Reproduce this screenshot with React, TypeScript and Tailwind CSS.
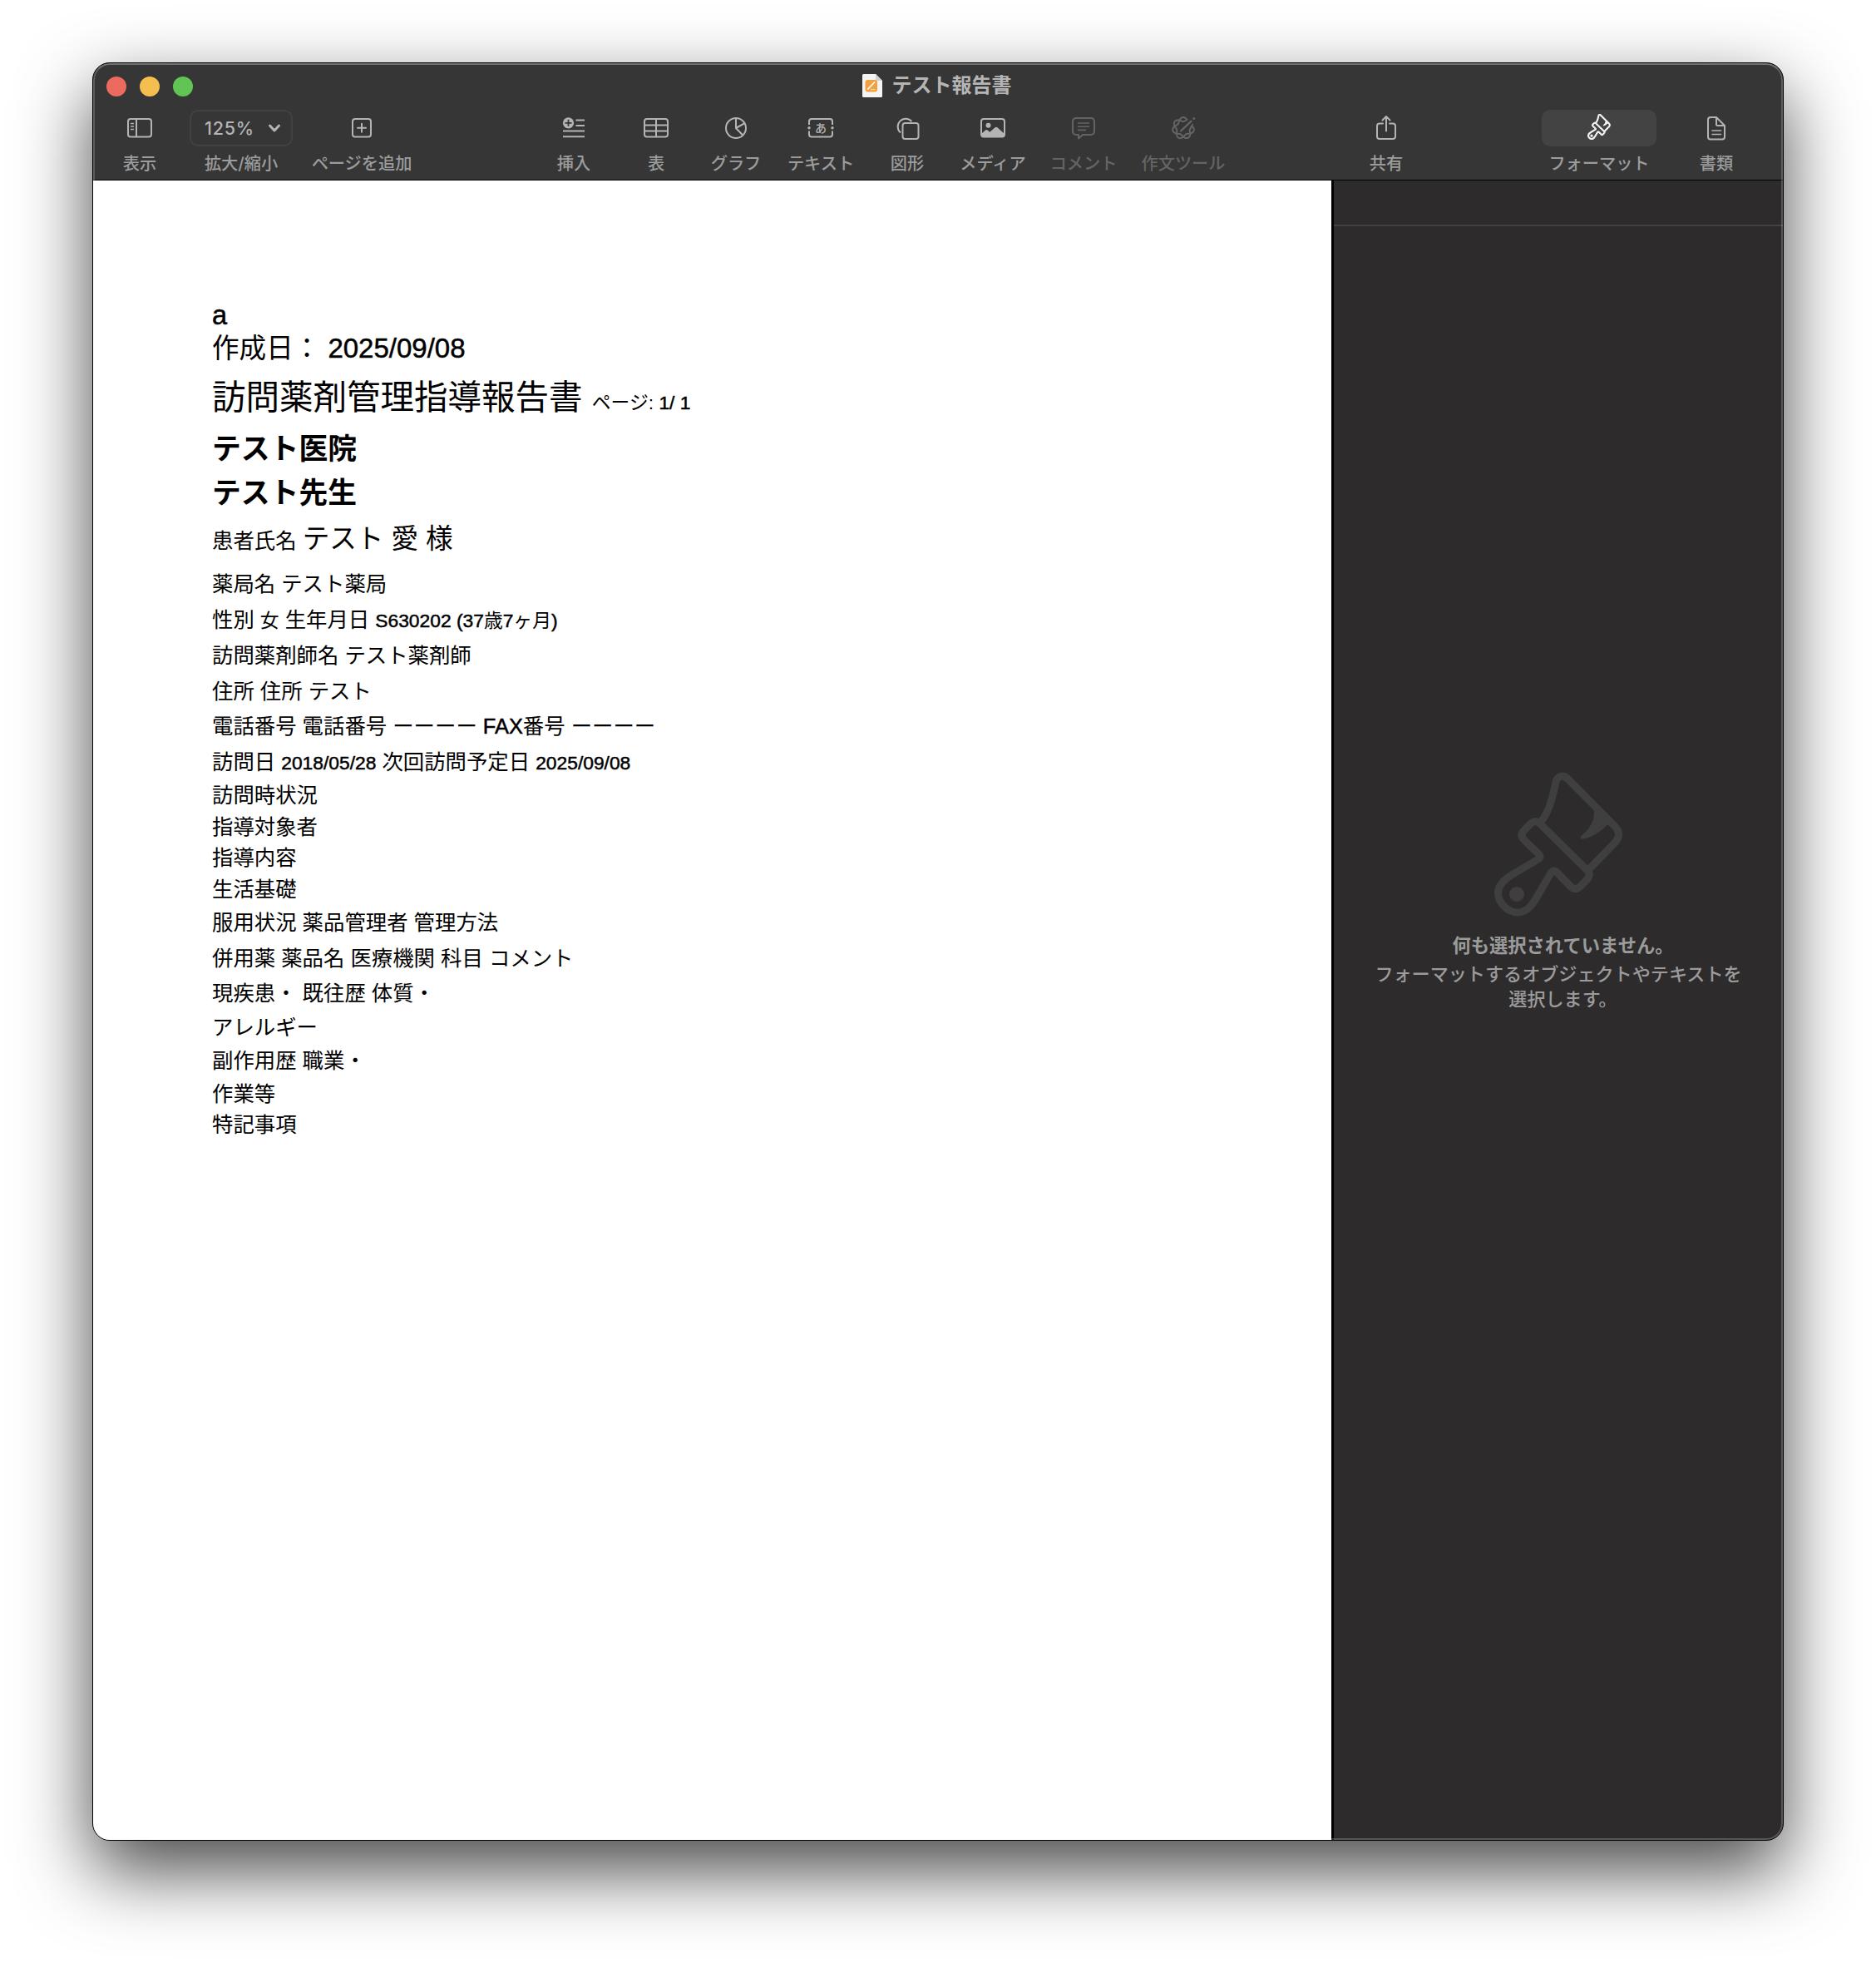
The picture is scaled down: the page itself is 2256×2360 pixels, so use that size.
import type { ReactNode } from 'react'
import clsx from 'clsx'

const UI_FONT = "font-['Inter','Noto_Sans_CJK_JP',sans-serif]"
const DOC_FONT = "font-['Liberation_Sans','Noto_Sans_CJK_JP',sans-serif]"

function SidebarIcon() {
  return (
    <svg width="32" height="26" viewBox="0 0 32 26" fill="none" stroke="currentColor" strokeWidth="2">
      <rect x="2" y="2" width="28" height="21.5" rx="3" />
      <path d="M12 2v21.5" />
      <path d="M5 7.5h4M5 11h4M5 14.5h4" strokeWidth="1.4" />
    </svg>
  )
}

function AddPageIcon() {
  return (
    <svg width="26" height="26" viewBox="0 0 26 26" fill="none" stroke="currentColor" strokeWidth="2">
      <rect x="2" y="2" width="22" height="21.5" rx="3" />
      <path d="M13 7.8v10M8 12.8h10" strokeLinecap="round" />
    </svg>
  )
}

function InsertIcon() {
  return (
    <svg width="28" height="26" viewBox="0 0 28 26" fill="none" stroke="currentColor" strokeWidth="2">
      <circle cx="7.5" cy="6.8" r="6.6" fill="currentColor" stroke="none" />
      <path d="M7.5 2.8v8M3.5 6.8h8" stroke="#363636" strokeWidth="1.8" />
      <path d="M16.5 3.5H27M16.5 10H27M1 16.5h26M1 23.2h26" />
    </svg>
  )
}

function TableIcon() {
  return (
    <svg width="32" height="26" viewBox="0 0 32 26" fill="none" stroke="currentColor" strokeWidth="2">
      <rect x="2" y="2" width="28" height="21.5" rx="3" />
      <path d="M16 2v21.5M2 9.5h28M2 16.5h28" />
    </svg>
  )
}

function ChartIcon() {
  return (
    <svg width="28" height="28" viewBox="0 0 28 28" fill="none" stroke="currentColor" strokeWidth="2">
      <circle cx="14" cy="14" r="12" />
      <path d="M14 2v12l8 8.3M14 14l10.5-5.8" />
    </svg>
  )
}

function TextIcon() {
  return (
    <svg width="32" height="26" viewBox="0 0 32 26" fill="none" stroke="currentColor" strokeWidth="2">
      <path d="M2 9V5a3 3 0 0 1 3-3h22a3 3 0 0 1 3 3v4M2 16.5v4a3 3 0 0 0 3 3h22a3 3 0 0 0 3-3v-4" />
      <circle cx="2" cy="12.8" r="1.7" fill="currentColor" stroke="none" />
      <circle cx="30" cy="12.8" r="1.7" fill="currentColor" stroke="none" />
      <text x="16" y="18" textAnchor="middle" fill="currentColor" stroke="none" className="font-['Noto_Sans_CJK_JP',sans-serif] text-[14px] font-medium">あ</text>
    </svg>
  )
}

function ShapeIcon() {
  return (
    <svg width="30" height="30" viewBox="0 0 30 30" fill="none" stroke="currentColor" strokeWidth="2">
      <rect x="9.5" y="9" width="19" height="19" rx="3" />
      <path d="M7 20.5A9.5 9.5 0 1 1 20.3 7" />
    </svg>
  )
}

function MediaIcon() {
  return (
    <svg width="32" height="26" viewBox="0 0 32 26" fill="none" stroke="currentColor" strokeWidth="2">
      <rect x="2" y="2" width="28" height="21.5" rx="3" />
      <circle cx="10.5" cy="9.8" r="3" fill="currentColor" stroke="none" />
      <path d="M2 20l5-4.5q1.3-1 2.6 0l2.7 2.3 6.3-5.5q1.4-1.2 2.8 0L30 20v1.5a2 2 0 0 1-2 2H4a2 2 0 0 1-2-2z" fill="currentColor" stroke="none" />
    </svg>
  )
}

function CommentIcon() {
  return (
    <svg width="30" height="30" viewBox="0 0 30 30" fill="none" stroke="currentColor" strokeWidth="2" strokeLinejoin="round">
      <path d="M6 3h18a4 4 0 0 1 4 4v12a4 4 0 0 1-4 4H14l-5 4.5V23H6a4 4 0 0 1-4-4V7a4 4 0 0 1 4-4z" />
      <path d="M8 9h14M8 13.2h14M8 17.4h10" strokeWidth="1.6" />
    </svg>
  )
}

// Seven interlaced lobes: one strand that goes round twice.
const knot = Array.from({ length: 181 }, (_, i) => {
  const angle = (i / 180) * 4 * Math.PI
  const r = 10.5 + 2.5 * Math.cos(3.5 * (angle - 0.68))
  return `${(15 + r * Math.cos(angle)).toFixed(2)},${(16 - r * Math.sin(angle)).toFixed(2)}`
}).join(' ')

function WritingToolsIcon() {
  return (
    <svg width="30" height="32" viewBox="0 0 30 32" fill="none" stroke="currentColor" strokeWidth="2" strokeLinecap="round">
      <polygon points={knot} />
      <path d="M16 15.5L29 3" stroke="#363636" strokeWidth="7.5" />
      <path d="M12 19.5L24.5 7.7" strokeWidth="2.4" />
      <circle cx="27.8" cy="4.6" r="1.5" fill="currentColor" stroke="none" />
    </svg>
  )
}

function ShareIcon() {
  return (
    <svg width="26" height="32" viewBox="0 0 26 32" fill="none" stroke="currentColor" strokeWidth="2" strokeLinecap="round" strokeLinejoin="round">
      <path d="M9 10.5H5a3 3 0 0 0-3 3V26a3 3 0 0 0 3 3h16a3 3 0 0 0 3-3V13.500a3 3 0 0 0-3-3h-4" />
      <path d="M13 19.5V2.5M8.5 6.5L13 2l4.500 4.500" />
    </svg>
  )
}

function DocumentIcon() {
  return (
    <svg width="24" height="30" viewBox="0 0 24 30" fill="none" stroke="currentColor" strokeWidth="2" strokeLinejoin="round">
      <path d="M5 2h7l10 10v13.5a3 3 0 0 1-3 3H5a3 3 0 0 1-3-3V5a3 3 0 0 1 3-3z" />
      <path d="M12 2v8.5a1.500 1.500 0 0 0 1.500 1.500H22" />
      <path d="M7 18h10.5M7 22.500h10.500" strokeWidth="1.6" strokeLinecap="round" />
    </svg>
  )
}

function BrushIcon({ className, strokeWidth }: { className: string; strokeWidth: number }) {
  return (
    <svg className={className} viewBox="0 0 155 174" fill="none" stroke="currentColor" strokeWidth={strokeWidth} strokeLinejoin="round">
      <path d="M56 60C65 50 70 32 73.5 14C75 4 84 2.5 89.5 9.5L146 66.5Q153 75 146 84L113 118" />
      <path d="M54 61.5Q49 57.5 44 62L35.5 70.5Q30.5 76 35.5 81.5L54 99.5Q56.5 102 53.5 104.5L24 122C8 131 4.5 139 4.5 146C4.5 157 16 169 28 169C40 169 47 158 52 149L68 121.5Q71.5 117 75 120.5L92 138Q97.5 143 103 138L112 129Q116.5 123 112 118.5Z" />
      <path d="M120 47C121 60 113 70 104 77.5Q102.5 81 107 80.8C118 79 130 70 136.5 63L142 60z" fill="currentColor" stroke="none" />
      <circle cx="27" cy="147" r="9" fill="currentColor" stroke="none" />
    </svg>
  )
}

interface ToolbarItemProps {
  label: string
  className: string
  disabled?: boolean
  children: ReactNode
}

function ToolbarItem({ label, className, disabled, children }: ToolbarItemProps) {
  return (
    <div className={clsx('flex shrink-0 flex-col items-center', disabled ? 'text-[#646464]' : 'text-[#b4b4b4]', className)}>
      <div className="flex h-11 w-full items-center justify-center">{children}</div>
      <span className={clsx('mt-[7px] text-[20.2px] leading-7 font-medium whitespace-nowrap', !disabled && 'text-[#9c9c9c]')}>{label}</span>
    </div>
  )
}

function TitleBar() {
  return (
    <div className="grid h-14 grid-cols-[1fr_auto_1fr] items-center">
      <div className="flex gap-4 pl-4">
        <span className="size-6 rounded-full bg-[#ed6a5e]" />
        <span className="size-6 rounded-full bg-[#f5bf4f]" />
        <span className="size-6 rounded-full bg-[#61c554]" />
      </div>
      <div className="flex items-center gap-3 pr-[3px] pb-0.5">
        <svg width="24" height="28" viewBox="0 0 24 28">
          <path d="M1.5 0H16l8 8v18.5a1.5 1.5 0 0 1-1.5 1.5h-21A1.5 1.5 0 0 1 0 26.5v-25A1.5 1.5 0 0 1 1.5 0z" fill="#f4f4f4" />
          <path d="M16 0l8 8h-6.5A1.5 1.5 0 0 1 16 6.5z" fill="#d0d0d0" />
          <rect x="3.5" y="7" width="14.5" height="14.5" rx="3" fill="#f2a141" />
          <path d="M6.8 18l7.7-8" stroke="#fff" strokeWidth="1.8" strokeLinecap="round" />
          <path d="M10 18.6h5.5" stroke="#fbd9ae" />
        </svg>
        <h1 className="text-2xl leading-8 font-bold text-[#b5b5b5]">テスト報告書</h1>
      </div>
    </div>
  )
}

function Toolbar() {
  return (
    <div className="flex h-[84px] items-start">
      <ToolbarItem label="表示" className="ml-9 w-10"><SidebarIcon /></ToolbarItem>
      <ToolbarItem label="拡大/縮小" className="ml-10 w-[124px]">
        <div className="flex h-11 w-full items-center justify-between rounded-[10px] border-2 border-[#414141] pr-3 pl-4">
          <span className="text-[21.5px] leading-6 font-medium tracking-[0.8px]">125%</span>
          <svg width="16" height="12" viewBox="0 0 16 12" fill="none" stroke="currentColor" strokeWidth="3" strokeLinecap="round" strokeLinejoin="round">
            <path d="M2.5 3L8 9l5.5-6" />
          </svg>
        </div>
      </ToolbarItem>
      <ToolbarItem label="ページを追加" className="ml-[23px] w-[120px]"><AddPageIcon /></ToolbarItem>

      <ToolbarItem label="挿入" className="ml-[175px] w-10"><InsertIcon /></ToolbarItem>
      <ToolbarItem label="表" className="ml-[63px] w-8"><TableIcon /></ToolbarItem>
      <ToolbarItem label="グラフ" className="ml-[50px] w-15"><ChartIcon /></ToolbarItem>
      <ToolbarItem label="テキスト" className="ml-8 w-20"><TextIcon /></ToolbarItem>
      <ToolbarItem label="図形" className="ml-11 w-10"><ShapeIcon /></ToolbarItem>
      <ToolbarItem label="メディア" className="ml-[43px] w-20"><MediaIcon /></ToolbarItem>
      <ToolbarItem label="コメント" className="ml-[29px] w-20" disabled><CommentIcon /></ToolbarItem>
      <ToolbarItem label="作文ツール" className="ml-[30px] w-25" disabled><WritingToolsIcon /></ToolbarItem>

      <ToolbarItem label="共有" className="ml-[174px] w-10"><ShareIcon /></ToolbarItem>
      <ToolbarItem label="フォーマット" className="ml-[167px] w-[138px]">
        <div className="flex h-11 w-full items-center justify-center rounded-[10px] bg-[#434343] text-[#f2f2f2]">
          <BrushIcon className="mb-1 h-[31px] w-7" strokeWidth={12} />
        </div>
      </ToolbarItem>
      <ToolbarItem label="書類" className="ml-13 w-10"><DocumentIcon /></ToolbarItem>
    </div>
  )
}

// Every row ends 11px below its baseline, so the heights are baseline distances.
function Row({ className, children }: { className: string; children: ReactNode }) {
  return (
    <div className={clsx('flex items-end', className)}>
      <p className="text-[25.4px] leading-10 whitespace-pre">{children}</p>
    </div>
  )
}

function Small({ children }: { children: ReactNode }) {
  return <span className="text-[22.8px] leading-none">{children}</span>
}

function Large({ children }: { children: ReactNode }) {
  return <span className="text-[32.6px] leading-none">{children}</span>
}

function Strong({ children }: { children: ReactNode }) {
  return <strong className="text-[34.8px] leading-none font-bold">{children}</strong>
}

function Latin({ children }: { children: ReactNode }) {
  return <span className="[-webkit-text-stroke:0.5px_black]">{children}</span>
}

function Page() {
  return (
    <main className={clsx('w-[1489px] bg-white pt-36 pl-[143px] text-black', DOC_FONT)}>
      <Row className="h-10"><Large><Latin>a</Latin></Large></Row>
      <Row className="h-10"><Large>作成日： <Latin><span className="text-[33px] leading-none">2025/09/08</span></Latin></Large></Row>
      <Row className="h-[62px]"><span className="text-[40.5px] leading-none">訪問薬剤管理指導報告書 </span><Small>ページ: <Latin>1/ 1</Latin></Small></Row>
      <Row className="h-[60px]"><Strong>テスト医院</Strong></Row>
      <Row className="h-[53px]"><Strong>テスト先生</Strong></Row>
      <Row className="h-[54px]">患者氏名 <Large>テスト 愛 様</Large></Row>
      <Row className="h-[52px]">薬局名 テスト薬局</Row>
      <Row className="h-[43px]">性別 <Small>女</Small> 生年月日 <Small><Latin>S630202 (37</Latin>歳<Latin>7</Latin>ヶ月<Latin>)</Latin></Small></Row>
      <Row className="h-[43px]">訪問薬剤師名 テスト薬剤師</Row>
      <Row className="h-[43px]">住所 住所 テスト</Row>
      <Row className="h-[42px]">電話番号 電話番号 ーーーー <Latin>FAX</Latin>番号 ーーーー</Row>
      <Row className="h-[43px]">訪問日 <Small><Latin>2018/05/28</Latin></Small> 次回訪問予定日 <Small><Latin>2025/09/08</Latin></Small></Row>
      <Row className="h-10">訪問時状況</Row>
      <Row className="h-[38px]">指導対象者</Row>
      <Row className="h-[37px]">指導内容</Row>
      <Row className="h-[38px]">生活基礎</Row>
      <Row className="h-10">服用状況 薬品管理者 管理方法</Row>
      <Row className="h-[43px]">併用薬 薬品名 医療機関 科目 コメント</Row>
      <Row className="h-[42px]">現疾患・ 既往歴 体質・</Row>
      <Row className="h-[41px]">アレルギー</Row>
      <Row className="h-10">副作用歴 職業・</Row>
      <Row className="h-10">作業等</Row>
      <Row className="h-[37px]">特記事項</Row>
    </main>
  )
}

function Inspector() {
  return (
    <aside className="flex flex-1 flex-col border-l-3 border-black bg-[#2d2b2c]">
      <div className="h-[55px] border-b-2 border-[#434243]" />
      <div className="flex flex-col items-center pt-[656px] text-center text-[22.1px] leading-[30px] text-[#9b9b9b]">
        <BrushIcon className="h-[174px] w-[155px] text-[#3f3f3f]" strokeWidth={9} />
        {/* the closing 。 only fills half its box, so both lines are nudged right */}
        <p className="mt-5 pl-[11px] text-[22.3px] font-bold">何も選択されていません。</p>
        <p className="mt-1 font-medium">フォーマットするオブジェクトやテキストを</p>
        <p className="pl-[11px] font-medium">選択します。</p>
      </div>
    </aside>
  )
}

export default function App() {
  return (
    <div className="h-[2360px] w-[2256px] overflow-hidden bg-white pt-[75px] pl-[111px]">
      <div className={clsx('relative flex h-[2138px] w-[2034px] flex-col overflow-hidden rounded-[21px] border border-black bg-[#363636] shadow-[0_36px_88px_rgba(0,0,0,0.72)]', UI_FONT)}>
        <header className="h-[141px] border-b border-black">
          <TitleBar />
          <Toolbar />
        </header>
        <div className="flex flex-1">
          <Page />
          <Inspector />
        </div>
        {/* light rim along the window edge */}
        <div className="pointer-events-none absolute inset-0 rounded-[20px] border-2 border-white/20 border-t-white/30" />
      </div>
    </div>
  )
}
